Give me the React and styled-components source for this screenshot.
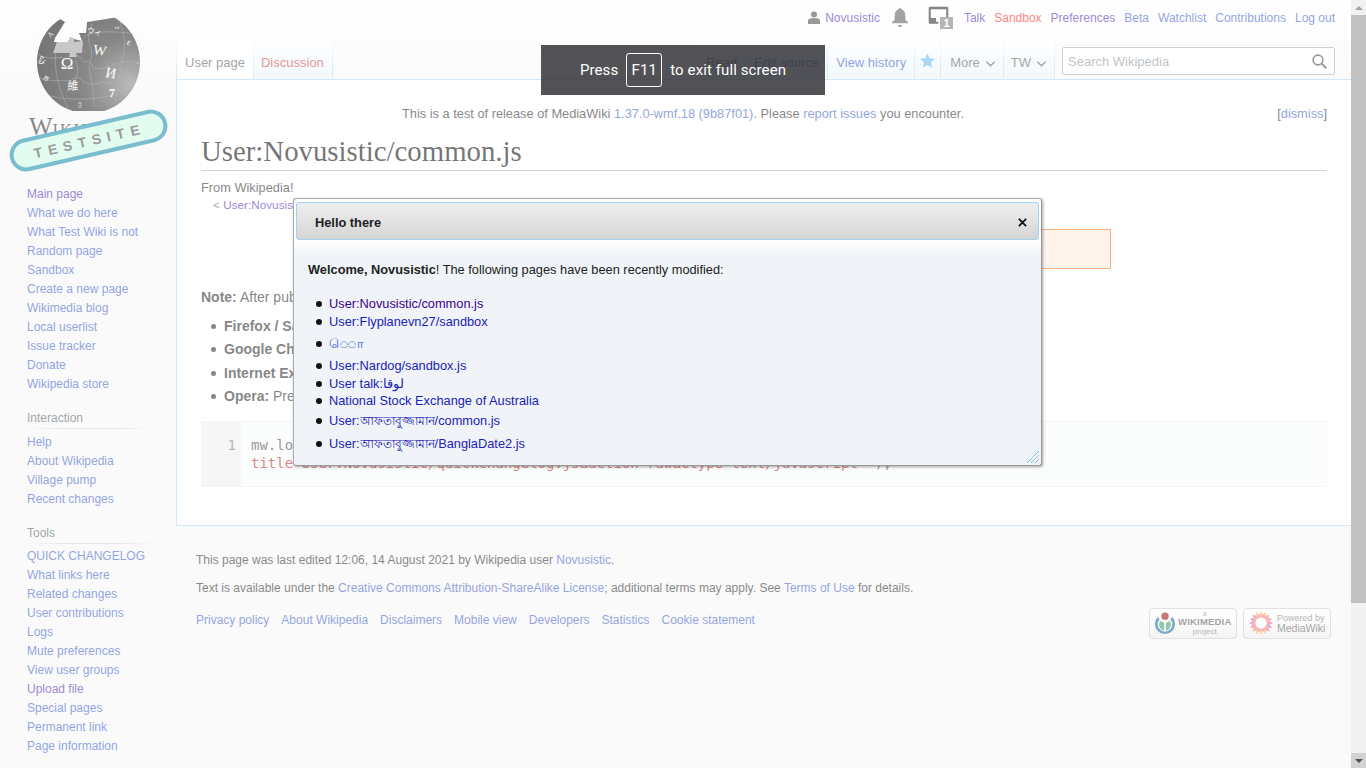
import React from "react";
import styled, { createGlobalStyle } from "styled-components";

const Global = createGlobalStyle`
  html, body { margin: 0; padding: 0; height: 100%; overflow: hidden; }
  body { font-family: "Liberation Sans", Arial, sans-serif; color: #202122; background: #f6f6f6; }
  * { box-sizing: border-box; }
`;

const Screen = styled.div`display: flex; width: 1366px; height: 768px;`;
const Viewport = styled.div`
  position: relative; width: 1351px; height: 768px; overflow: hidden;
  background: linear-gradient(#fff 0, #f6f6f6 80px);
`;
const Columns = styled.div`display: grid; grid-template-columns: 176px 1fr;`;
const Overlay = styled.div`position: absolute; inset: 0; background: rgba(255,255,255,.46); z-index: 5;`;

const Scrollbar = styled.div`width: 15px; height: 768px; background: #f1f1f1; display: flex; flex-direction: column;`;
const ScrollButton = styled.div`
  height: 15px; display: flex; align-items: center; justify-content: center;
  background: ${p => (p.$active ? "#d2d2d2" : "#f1f1f1")};
`;
const ScrollArrow = styled.div`
  width: 0; height: 0; border-left: 4px solid transparent; border-right: 4px solid transparent;
  ${p => (p.$down ? "border-top: 4px solid #505050;" : "border-bottom: 4px solid #a3a3a3;")}
`;
const ScrollThumb = styled.div`height: 588px; background: #c1c1c1;`;
const ScrollRest = styled.div`flex: 1;`;

/* Sidebar */
const Sidebar = styled.aside`display: flex; flex-direction: column;`;
const LogoBox = styled.div`position: relative; height: 185px;`;
const Wordmark = styled.div`
  position: absolute; left: 29px; top: 113px; font-family: "Liberation Serif", serif;
  font-size: 25px; line-height: 28px; color: #222; white-space: nowrap;
`;
const WordSmall = styled.span`font-size: 16.5px; letter-spacing: 1.8px;`;
const Tagline = styled.div`
  position: absolute; left: 0; width: 176px; top: 140px; text-align: center;
  font-family: "Liberation Serif", serif; font-size: 11px; color: #666;
`;
const Pill = styled.div`
  position: absolute; left: 8px; top: 124px; width: 161px; height: 33px;
  border: 4px solid #0985a4; border-radius: 17px; background: rgba(198,251,227,.95);
  transform: rotate(-13deg); display: flex; align-items: center; justify-content: center;
  font-size: 14px; font-weight: 700; letter-spacing: 5.9px; color: #444; padding-left: 2px;
`;
const PortalSection = styled.nav`padding-left: 27px; width: 155px; margin-top: ${p => p.$top || 0}px;`;
const PortalHeading = styled.h3`
  margin: 0; height: 20px; font-size: 12px; line-height: 18px; font-weight: 400; color: #54595d;
  border-bottom: 1px solid; width: 128px;
  border-image: linear-gradient(to right, rgba(200,204,209,0) 0, #c8ccd1 33%, #c8ccd1 66%, rgba(200,204,209,0) 100%) 1;
`;
const PortalList = styled.ul`margin: 0; padding: ${p => p.$gap || 0}px 0 0; list-style: none;`;
const PortalItem = styled.li`height: 19px; line-height: 19px; font-size: 12px; white-space: nowrap;`;
const Link = styled.a`
  color: ${p => ({ visited: "#4a20b0", red: "#ff1010", newtab: "#cc4040" }[p.$kind] || "#3556c8")};
  text-decoration: none; cursor: pointer;
`;

/* Head */
const Main = styled.main`display: flex; flex-direction: column; min-width: 0;`;
const Head = styled.header`height: 79px; display: flex; flex-direction: column;`;
const PersonalRow = styled.div`
  height: 39px; padding: 0 16px 3px 0; display: flex; align-items: center; justify-content: flex-end;
  font-size: 12px; color: #444;
`;
const PersonalLink = styled.span`margin-left: ${p => p.$gap ?? 9}px; display: inline-flex; align-items: center; white-space: nowrap;`;
const TabsRow = styled.div`height: 41px; display: flex; align-items: stretch; position: relative; z-index: 1;`;
const TabGroup = styled.div`display: flex; align-items: stretch; margin-left: ${p => (p.$right ? "auto" : 0)};`;
const Tab = styled.div`
  padding: 16px ${p => p.$pr ?? 8}px 0 ${p => p.$pl ?? 8}px; font-size: 13px; line-height: 18px; white-space: nowrap; display: flex; align-items: flex-start; gap: 5px;
  border-right: 1px solid; color: #54595d; height: ${p => (p.$active ? "41px" : "40px")};
  border-image: linear-gradient(to bottom, rgba(167,215,249,0) 0, #a7d7f9 100%) 1;
  ${p => p.$first && "border-left: 1px solid;"}
  background: ${p => (p.$active ? "#fff" : "linear-gradient(to top, #e8f2f8 0, #fff 100%)")};
`;
const StarTab = styled(Tab)`width: 26px; padding: 15px 0 0 5px;`;
const SearchBox = styled.div`
  width: 273px; height: 28px; margin: 9px 16px 0 7px; border: 1px solid #a2a9b1; border-radius: 2px; background: #fff;
  display: flex; align-items: center; justify-content: space-between; padding: 0 7px 0 5px;
  font-size: 13px; color: #8a8f96;
`;

/* Content */
const Content = styled.div`
  border: 1px solid #a7d7f9; border-right: 0; background: #fff; padding: 25px 24px 38px;
`;
const SiteNotice = styled.div`display: grid; grid-template-columns: 964px 1fr; font-size: 12.8px; line-height: 18px; color: #202122;`;
const NoticeText = styled.div`text-align: center; white-space: nowrap;`;
const Dismiss = styled.div`text-align: right;`;
const Title = styled.h1`
  margin: 9px 0 0; font-family: "Liberation Serif", serif; font-weight: 400; font-size: 28.8px; line-height: 38px;
  height: 39px; border-bottom: 1px solid #a2a9b1; color: #000;
`;
const TagLine = styled.div`margin-top: 9px; font-size: 12.8px; line-height: 16px; color: #202122;`;
const SubLine = styled.div`margin: 1px 0 0 12px; font-size: 11.76px; line-height: 16px; color: #54595d;`;
const NoteBox = styled.div`
  margin: 16px 0 0 216px; width: 694px; height: 40px; background: #ffecde; border: 1px solid #ff6f00;
`;
const Para = styled.p`margin: 19px 0 0; font-size: 14px; line-height: 18px; white-space: nowrap;`;
const Bullets = styled.ul`margin: 11px 0 0; padding: 0 0 0 23px; font-size: 14px; list-style: none;`;
const Bullet = styled.li`
  position: relative; height: 23.4px; line-height: 18px; white-space: nowrap;
  &::before {
    content: ""; position: absolute; left: -13px; top: 7px; width: 5px; height: 5px; border-radius: 50%; background: #202122;
  }
`;
const CodeBlock = styled.div`
  margin-top: 10px; display: grid; grid-template-columns: 40px 1fr; height: 66px; background: #f8f9fa; border: 1px solid #eaecf0; border-left: 0;
  font-family: "DejaVu Sans Mono", monospace; font-size: 14px; line-height: 18px;
`;
const Gutter = styled.div`background: #eeeeee; padding: 14px 5px 0 0; text-align: right; color: #6a8080; font-size: 14px;`;
const CodeText = styled.pre`margin: 0; padding: 14px 10px 0; font: inherit; color: #444;`;
const CodeString = styled.span`color: #ba2121;`;

/* Footer */
const Footer = styled.footer`padding: 25px 20px 0; font-size: 12px; line-height: 18px; color: #222;`;
const FootLine = styled.div`margin-bottom: 10px;`;
const FootRow = styled.div`display: flex; align-items: flex-start; justify-content: space-between; margin-top: 14px;`;
const FootLinks = styled.div`display: flex; gap: 12px;`;
const Badges = styled.div`display: flex; gap: 6px; margin-top: -3px;`;
const Badge = styled.div`
  width: 88px; height: 31px; border: 1px solid #c8c8c8; border-radius: 4px; background: linear-gradient(#fff, #ececec);
  display: flex; align-items: center; padding-left: ${p => p.$pad}px; gap: ${p => p.$gap}px;
`;
const BadgeText = styled.div`
  display: flex; flex-direction: column; align-items: ${p => (p.$center ? "center" : "flex-start")}; line-height: 1; color: #444; font-family: "Liberation Sans", sans-serif;
`;
const BadgeSmall = styled.span`font-size: ${p => p.$size || 8}px; color: #777; line-height: ${p => p.$lh || 9}px;`;
const BadgeBig = styled.span`font-size: ${p => p.$size || 9}px; font-weight: ${p => p.$w || 700}; color: #555; line-height: 10px; letter-spacing: ${p => p.$ls || 0}px;`;

/* Dialog */
const Dialog = styled.section`
  position: absolute; left: 293px; top: 198px; width: 749px; height: 268px; z-index: 6;
  border: 1px solid #a9a9b8; border-bottom-color: #999; border-right-color: #999; border-radius: 3px; background: #f0f4f8;
  padding: 3px 2px 0 2px; display: flex; flex-direction: column; box-shadow: 1px 1px 3px rgba(0,0,0,.35);
  background-image: linear-gradient(#fff 0, #fff 40px, #f0f4f8 56px);
`;
const TitleBar = styled.div`
  height: 38px; flex: none; border: 1px solid #a6d0f0; border-radius: 3px; background: linear-gradient(#efefef, #d5d5d5);
  display: flex; align-items: center; justify-content: space-between; padding: 2px 11px 0 18px;
  font-size: 12.8px; font-weight: 700; color: #222;
`;
const DialogBody = styled.div`padding: 21px 0 0 12px; font-size: 12.8px; color: #222;`;
const WelcomeLine = styled.div`line-height: 18px; white-space: nowrap;`;
const ModList = styled.ul`margin: 16px 0 0; padding: 0 0 0 21px; list-style: none;`;
const ModItem = styled.li`
  position: relative; height: ${p => p.$h}px; line-height: ${p => p.$h}px; white-space: nowrap;
  &::before {
    content: ""; position: absolute; left: -13px; top: calc(50% - 3px); width: 6px; height: 6px; border-radius: 50%; background: #111;
  }
`;
const ModLink = styled.a`color: ${p => (p.$visited ? "#3d0090" : "#1a22b8")}; text-decoration: none;`;
const Bengali = styled.span`font-size: 12.2px;`;
const OddScript = styled.span`letter-spacing: -1.6px; color: #3a60d8;`;
const Grip = styled.svg`position: absolute; right: 2px; bottom: 2px;`;

/* Fullscreen bubble */
const Bubble = styled.div`
  position: absolute; left: 541px; top: 45px; width: 284px; height: 50px; z-index: 8;
  background: rgba(44,44,50,.82); color: #fff; display: flex; align-items: center; justify-content: center; gap: 8px;
  font-family: Roboto, sans-serif; font-size: 15px; letter-spacing: .1px;
`;
const Key = styled.span`
  width: 36px; height: 34px; border: 1px solid #fff; border-radius: 3px; display: flex; align-items: center; justify-content: center;
`;

const nav1 = ["Main page", "What we do here", "What Test Wiki is not", "Random page", "Sandbox", "Create a new page", "Wikimedia blog", "Local userlist", "Issue tracker", "Donate", "Wikipedia store"];
const nav2 = ["Help", "About Wikipedia", "Village pump", "Recent changes"];
const nav3 = ["QUICK CHANGELOG", "What links here", "Related changes", "User contributions", "Logs", "Mute preferences", "View user groups", "Upload file", "Special pages", "Permanent link", "Page information"];

const Globe = () => (
  <svg width="176" height="116" viewBox="0 0 176 116" style={{ position: "absolute", left: 0, top: 0 }}>
    <defs>
      <radialGradient id="gl" cx=".9" cy=".72" r="1">
        <stop offset="0" stopColor="#808080" />
        <stop offset=".45" stopColor="#242424" />
        <stop offset="1" stopColor="#000" />
      </radialGradient>
      <clipPath id="gc">
        <path d="M0 111H176V12L118 17 100 20 87 22 86 33 79 33 82 41 70 38 68 42 54 42 55 38 65 22 60 19 55 20 43 35 30 40 0 40Z" />
      </clipPath>
    </defs>
    <g clipPath="url(#gc)">
      <circle cx="88.5" cy="62" r="51.5" fill="url(#gl)" />
      <g fill="none" stroke="#777" strokeWidth=".7" opacity=".8">
        <path d="M38 54c10 6 18 4 24 3 3 4 8 3 9-1 7-2 10 1 13 6 5-2 9 1 8 5 6 3 14 2 20-2 8-3 15-4 26-4" />
        <path d="M40 78c12 4 20 2 30 3 5-5 11-4 13 1 8 3 14 3 20 0 9 2 20 0 28-6" />
        <path d="M60 30c-4 14-6 26-4 40 1 12 6 26 12 38" />
        <path d="M92 24c-3 8-5 14-2 22 4 9 0 14-1 21 2 12 5 24 5 40" />
        <path d="M120 22c4 12 6 22 3 34-3 14-5 30-8 46" />
        <path d="M84 36c12-4 26-6 50-2" />
        <path d="M50 96c16 4 44 5 66 -2" />
        <path d="M75 60c3 6 4 12 0 20" />
        <path d="M105 62c4 4 8 8 6 16" />
      </g>
      <g fontFamily="'Liberation Serif', serif" fill="#fafafa" textAnchor="middle">
        <text x="67" y="69" fontSize="17">Ω</text>
        <text x="99" y="55" fontSize="14" transform="rotate(10 99 55)">W</text>
        <text x="110" y="78" fontSize="15" transform="rotate(10 110 78)">И</text>
        <text x="112" y="97" fontSize="12" fontWeight="700">7</text>
        <text x="73" y="90" fontSize="11" fontFamily="'Noto Sans CJK TC', sans-serif">維</text>
        <text x="94" y="34" fontSize="7.5" fontFamily="'Noto Sans CJK JP', sans-serif" transform="rotate(12 94 34)">ウィ</text>
        <text x="117" y="29" fontSize="7" fill="#ddd">ω</text>
        <text x="128" y="45" fontSize="9" transform="rotate(20 128 45)">ε</text>
        <text x="44" y="61" fontSize="8" transform="rotate(-70 44 61)">ლ</text>
        <text x="48" y="80" fontSize="7" transform="rotate(-60 48 80)">ज</text>
        <text x="134" y="64" fontSize="8" fill="#bbb" transform="rotate(80 134 64)">ו</text>
        <text x="80" y="106" fontSize="7" fill="#ddd">ე</text>
        <text x="52" y="36" fontSize="7" transform="rotate(-45 52 36)">A</text>
      </g>
    </g>
    <path d="M53 53 57 42H68L70 37 74 38 74 42 83 41 82 53H76L77 57H69L70 53Z" fill="#9a9a9a" />
  </svg>
);

const UserIcon = () => (
  <svg width="12" height="13" viewBox="0 0 12 13" fill="#444">
    <circle cx="6" cy="3.4" r="3" /><path d="M0 13V9.6C0 7.8 2.2 7 6 7s6 .8 6 2.6V13z" />
  </svg>
);
const BellIcon = () => (
  <svg width="16" height="19" viewBox="0 0 18 20" fill="#555" preserveAspectRatio="none">
    <path d="M9 0c1.2 0 2 .8 2 1.7C13.800 2.500 15 5 15 8v4.500l3 2.500v1H0v-1l3-2.500V8c0-3 1.200-5.500 4-6.300C7 .8 7.800 0 9 0z" />
    <path d="M6.500 17.800h5C11 19.200 10.100 20 9 20s-2-.8-2.500-2.200z" />
  </svg>
);
const NoticeIcon = () => (
  <svg width="25" height="23" viewBox="0 0 25 23">
    <path d="M2 1h17a1 1 0 0 1 1 1v9h-1.500V3H2.500v13H10v1.500H2a1 1 0 0 1-1-1V2a1 1 0 0 1 1-1z" fill="#222" stroke="#222" strokeWidth=".6" />
    <path d="M2 12l6 0v5H2z" fill="#222" />
    <rect x="12" y="11" width="13" height="12" fill="#777" />
    <text x="18.500" y="21" textAnchor="middle" fontSize="11" fontWeight="700" fontFamily="'Liberation Sans', sans-serif" fill="#fff">1</text>
  </svg>
);
const Chevron = () => (
  <svg width="11" height="12" viewBox="0 0 12 12" style={{ marginTop: 4 }}>
    <path d="M1.500 3.500 6 8l4.500-4.500" fill="none" stroke="#54595d" strokeWidth="1.600" />
  </svg>
);
const Star = () => (
  <svg width="15" height="15" viewBox="0 0 17 16">
    <path d="M8.500 0l2.500 5.400 6 .7-4.400 4 1.200 5.900-5.300-3-5.300 3 1.200-5.900L0 6.100l6-.7z" fill="#5fb5f5" />
  </svg>
);
const Magnifier = () => (
  <svg width="15" height="15" viewBox="0 0 15 15" fill="none" stroke="#444" strokeWidth="1.600">
    <circle cx="6" cy="6" r="4.900" /><path d="M9.600 9.600 14.300 14.300" strokeWidth="2" />
  </svg>
);
const CloseIcon = () => (
  <svg width="9" height="9" viewBox="0 0 10 10"><path d="M1 1l8 8M9 1l-8 8" stroke="#111" strokeWidth="2" /></svg>
);

const WikimediaMark = () => (
  <svg width="22" height="24" viewBox="0 0 24 24">
    <path d="M4 5.500A11 11 0 1 0 20 5.500L17.800 8a8 8 0 1 1-11.600 0z" fill="#006699" />
    <path d="M7 9.500a7 7 0 0 0 4 11V12zM17 9.500a7 7 0 0 1-4 11V12z" fill="#339966" />
    <circle cx="12" cy="4.500" r="4" fill="#990000" />
  </svg>
);
const MediaWikiMark = () => {
  const rays = Array.from({ length: 16 }, (_, i) => i * 22.5);
  const cols = ["#fdb45c", "#fc9a5c", "#f87a6c", "#ef5f80", "#d85c9c", "#c05bb0", "#e8608c", "#fbb050"];
  return (
    <svg width="24" height="24" viewBox="0 0 26 26">
      {rays.map((r, i) => (
        <path key={r} d="M13 0l3.500 7h-7z" fill={cols[i % 8]} transform={`rotate(${r} 13 13)`} />
      ))}
      <circle cx="13" cy="13" r="9" fill="#f47a7a" />
      <circle cx="13" cy="13" r="6" fill="#fff" />
    </svg>
  );
};

export default function App() {
  return (
    <Screen>
      <Global />
      <Viewport>
        <Columns>
          <Sidebar>
            <LogoBox>
              <Globe />
              <Wordmark>W<WordSmall>IKIPEDIA</WordSmall></Wordmark>
              <Tagline>Test Wiki</Tagline>
              <Pill>TESTSITE</Pill>
            </LogoBox>
            <PortalSection>
              <PortalList>
                {nav1.map((t, i) => <PortalItem key={t}><Link $kind={i === 0 ? "visited" : undefined}>{t}</Link></PortalItem>)}
              </PortalList>
            </PortalSection>
            <PortalSection $top={15}>
              <PortalHeading>Interaction</PortalHeading>
              <PortalList $gap={4}>
                {nav2.map(t => <PortalItem key={t}><Link>{t}</Link></PortalItem>)}
              </PortalList>
            </PortalSection>
            <PortalSection $top={15}>
              <PortalHeading>Tools</PortalHeading>
              <PortalList $gap={3}>
                {nav3.map(t => <PortalItem key={t}><Link $kind={t === "Upload file" ? "visited" : undefined}>{t}</Link></PortalItem>)}
              </PortalList>
            </PortalSection>
          </Sidebar>
          <Main>
            <Head>
              <PersonalRow>
                <PersonalLink $gap={0}><UserIcon /></PersonalLink>
                <PersonalLink $gap={5}><Link $kind="visited">Novusistic</Link></PersonalLink>
                <PersonalLink $gap={12}><BellIcon /></PersonalLink>
                <PersonalLink $gap={20}><NoticeIcon /></PersonalLink>
                <PersonalLink $gap={11}><Link $kind="visited">Talk</Link></PersonalLink>
                <PersonalLink><Link $kind="red">Sandbox</Link></PersonalLink>
                <PersonalLink><Link $kind="visited">Preferences</Link></PersonalLink>
                <PersonalLink><Link>Beta</Link></PersonalLink>
                <PersonalLink><Link>Watchlist</Link></PersonalLink>
                <PersonalLink><Link>Contributions</Link></PersonalLink>
                <PersonalLink><Link>Log out</Link></PersonalLink>
              </PersonalRow>
              <TabsRow>
                <TabGroup>
                  <Tab $first $active>User page</Tab>
                  <Tab $pl={7}><Link $kind="newtab">Discussion</Link></Tab>
                </TabGroup>
                <TabGroup $right>
                  <Tab>Read</Tab>
                  <Tab><Link>Edit source</Link></Tab>
                  <Tab><Link>View history</Link></Tab>
                  <StarTab><Star /></StarTab>
                  <Tab $pl={9} $pr={7}>More<Chevron /></Tab>
                  <Tab $pl={7} $pr={7}>TW<Chevron /></Tab>
                  <SearchBox>Search Wikipedia<Magnifier /></SearchBox>
                </TabGroup>
              </TabsRow>
            </Head>
            <Content>
              <SiteNotice>
                <NoticeText>This is a test of release of MediaWiki <Link>1.37.0-wmf.18 (9b87f01)</Link>. Please <Link>report issues</Link> you encounter.</NoticeText>
                <Dismiss>[<Link>dismiss</Link>]</Dismiss>
              </SiteNotice>
              <Title>User:Novusistic/common.js</Title>
              <TagLine>From Wikipedia!</TagLine>
              <SubLine>&lt; <Link $kind="visited">User:Novusistic</Link></SubLine>
              <NoteBox />
              <Para><b>Note:</b> After publishing, you may have to bypass your browser's cache to see the changes.</Para>
              <Bullets>
                <Bullet><b>Firefox / Safari:</b> Hold Shift while clicking Reload, or press either Ctrl-F5 or Ctrl-R</Bullet>
                <Bullet><b>Google Chrome:</b> Press Ctrl-Shift-R (⌘-Shift-R on a Mac)</Bullet>
                <Bullet><b>Internet Explorer:</b> Hold Ctrl while clicking Refresh, or press Ctrl-F5</Bullet>
                <Bullet><b>Opera:</b> Press Ctrl-F5.</Bullet>
              </Bullets>
              <CodeBlock>
                <Gutter>1</Gutter>
                <CodeText>mw.loader.load( <CodeString>'/w/index.php?</CodeString>{"\n"}<CodeString>title=User:Novusistic/quickchangelog.js&amp;action=raw&amp;ctype=text/javascript'</CodeString> );</CodeText>
              </CodeBlock>
            </Content>
            <Footer>
              <FootLine>This page was last edited 12:06, 14 August 2021 by Wikipedia user <Link>Novusistic</Link>.</FootLine>
              <FootLine>Text is available under the <Link>Creative Commons Attribution-ShareAlike License</Link>; additional terms may apply. See <Link>Terms of Use</Link> for details.</FootLine>
              <FootRow>
                <FootLinks>
                  {["Privacy policy", "About Wikipedia", "Disclaimers", "Mobile view", "Developers", "Statistics", "Cookie statement"].map(t => <Link key={t}>{t}</Link>)}
                </FootLinks>
                <Badges>
                  <Badge $pad={4} $gap={2}>
                    <WikimediaMark />
                    <BadgeText $center>
                      <BadgeSmall $size={7} $lh={7}>a</BadgeSmall>
                      <BadgeBig $size={9.500} $ls={.2}>WIKIMEDIA</BadgeBig>
                      <BadgeSmall $size={8}>project</BadgeSmall>
                    </BadgeText>
                  </Badge>
                  <Badge $pad={5} $gap={4}>
                    <MediaWikiMark />
                    <BadgeText>
                      <BadgeSmall $size={9} $lh={10}>Powered by</BadgeSmall>
                      <BadgeBig $size={10.500} $w={400}>MediaWiki</BadgeBig>
                    </BadgeText>
                  </Badge>
                </Badges>
              </FootRow>
            </Footer>
          </Main>
        </Columns>
        <Overlay />
        <Dialog>
          <TitleBar>Hello there<CloseIcon /></TitleBar>
          <DialogBody>
            <WelcomeLine><b>Welcome, Novusistic</b>! The following pages have been recently modified:</WelcomeLine>
            <ModList>
              <ModItem $h={18}><ModLink $visited>User:Novusistic/common.js</ModLink></ModItem>
              <ModItem $h={18}><ModLink>User:Flyplanevn27/sandbox</ModLink></ModItem>
              <ModItem $h={26}><ModLink><OddScript>ெ◌ா</OddScript></ModLink></ModItem>
              <ModItem $h={18}><ModLink>User:Nardog/sandbox.js</ModLink></ModItem>
              <ModItem $h={18}><ModLink>User talk:لوقا</ModLink></ModItem>
              <ModItem $h={16}><ModLink>National Stock Exchange of Australia</ModLink></ModItem>
              <ModItem $h={24}><ModLink>User:<Bengali>আফতাবুজ্জামান</Bengali>/common.js</ModLink></ModItem>
              <ModItem $h={22}><ModLink>User:<Bengali>আফতাবুজ্জামান</Bengali>/BanglaDate2.js</ModLink></ModItem>
            </ModList>
          </DialogBody>
          <Grip width="12" height="12" viewBox="0 0 12 12">
            <path d="M0 12 12 0M4 12l8-8M8 12l4-4" stroke="#5a9fd8" strokeWidth="1" strokeDasharray="1 .6" />
          </Grip>
        </Dialog>
        <Bubble>Press<Key>F11</Key>to exit full screen</Bubble>
      </Viewport>
      <Scrollbar>
        <ScrollButton><ScrollArrow /></ScrollButton>
        <ScrollThumb />
        <ScrollRest />
        <ScrollButton $active><ScrollArrow $down /></ScrollButton>
      </Scrollbar>
    </Screen>
  );
}
